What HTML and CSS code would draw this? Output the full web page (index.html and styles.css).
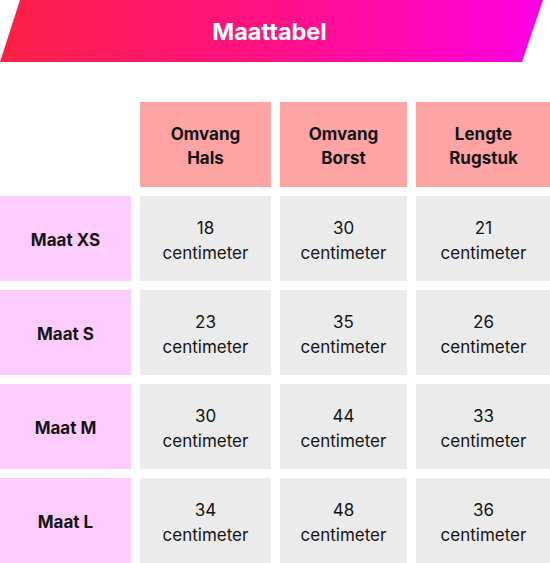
FILE: index.html
```html
<!DOCTYPE html>
<html lang="nl">
<head>
  <meta charset="UTF-8">
  <meta name="viewport" content="width=device-width, initial-scale=1.0">
  <title>Maattabel</title>
  <link rel="stylesheet" href="styles.css">
</head>
<body>
  <div class="banner">
    <h1>Maattabel</h1>
  </div>

  <div class="size-table">
    <div class="corner"></div>
    <div class="head">Omvang<br>Hals</div>
    <div class="head">Omvang<br>Borst</div>
    <div class="head">Lengte<br>Rugstuk</div>

    <div class="label">Maat XS</div>
    <div class="cell">18<br>centimeter</div>
    <div class="cell">30<br>centimeter</div>
    <div class="cell">21<br>centimeter</div>

    <div class="label">Maat S</div>
    <div class="cell">23<br>centimeter</div>
    <div class="cell">35<br>centimeter</div>
    <div class="cell">26<br>centimeter</div>

    <div class="label">Maat M</div>
    <div class="cell">30<br>centimeter</div>
    <div class="cell">44<br>centimeter</div>
    <div class="cell">33<br>centimeter</div>

    <div class="label">Maat L</div>
    <div class="cell">34<br>centimeter</div>
    <div class="cell">48<br>centimeter</div>
    <div class="cell">36<br>centimeter</div>
  </div>
</body>
</html>
```

FILE: styles.css
```css
body {
  margin: 0;
  padding: 0;
  background: #fff;
  font-family: Inter, 'Noto Sans', sans-serif;
  color: #141414;
  overflow: hidden;
}
.banner {
  width: 543px;
  height: 62px;
  display: flex;
  justify-content: center;
  align-items: center;
  background: linear-gradient(90deg, #fc2145 0%, #ff1184 50%, #ff00e6 100%);
  clip-path: polygon(20px 0, 100% 0, calc(100% - 21px) 100%, 0 100%);
}
.banner h1 {
  margin: 0 0 0 -4px;
  color: #fff;
  font-size: 23.5px;
  font-weight: 700;
}
.size-table {
  margin-top: 40px;
  display: grid;
  grid-template-columns: 131px 131px 127px 135px;
  grid-auto-rows: 85px;
  column-gap: 9px;
  row-gap: 9px;
}
.size-table > div {
  display: flex;
  align-items: center;
  justify-content: center;
  text-align: center;
  font-size: 17px;
}
.head {
  background: #ffa4a4;
  font-weight: 700;
  line-height: 24px;
  padding-top: 2px;
}
.label {
  background: #ffccff;
  font-weight: 700;
  padding-top: 2px;
}
.cell {
  background: #ebebeb;
  line-height: 25px;
  padding-top: 4px;
}
```
